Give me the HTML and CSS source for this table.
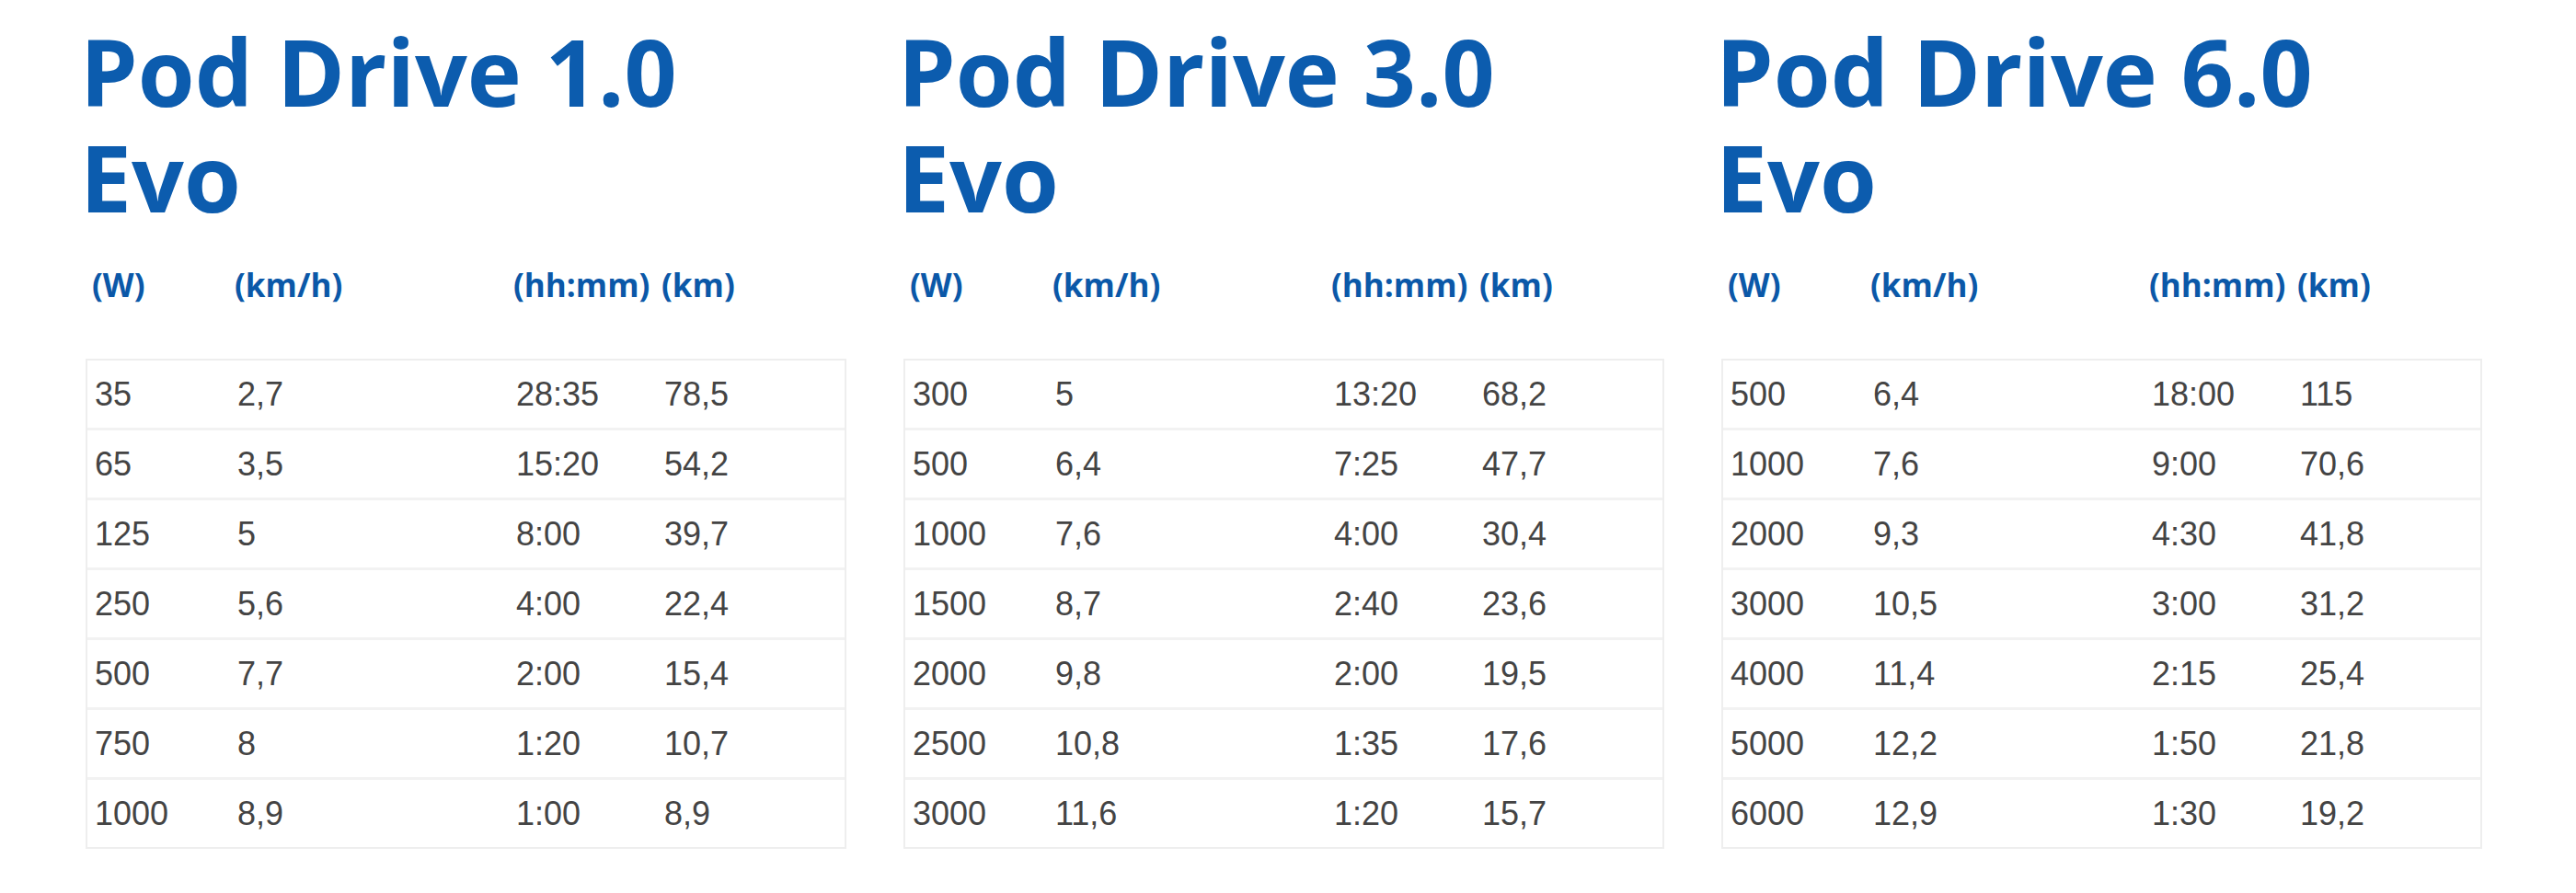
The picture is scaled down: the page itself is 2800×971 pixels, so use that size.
FILE: index.html
```html
<!DOCTYPE html>
<html lang="de">
<head>
<meta charset="utf-8">
<title>Pod Drive Evo</title>
<link rel="stylesheet" href="styles.css">
</head>
<body>
<main class="page">
  <section class="panel">
    <h2 class="title">Pod Drive 1.0<br>Evo</h2>
    <div class="head"><span>(W)</span><span>(km/h)</span><span>(hh:mm)</span><span>(km)</span></div>
    <div class="data">
      <div class="row"><span>35</span><span>2,7</span><span>28:35</span><span>78,5</span></div>
      <div class="row"><span>65</span><span>3,5</span><span>15:20</span><span>54,2</span></div>
      <div class="row"><span>125</span><span>5</span><span>8:00</span><span>39,7</span></div>
      <div class="row"><span>250</span><span>5,6</span><span>4:00</span><span>22,4</span></div>
      <div class="row"><span>500</span><span>7,7</span><span>2:00</span><span>15,4</span></div>
      <div class="row"><span>750</span><span>8</span><span>1:20</span><span>10,7</span></div>
      <div class="row"><span>1000</span><span>8,9</span><span>1:00</span><span>8,9</span></div>
    </div>
  </section>
  <section class="panel">
    <h2 class="title">Pod Drive 3.0<br>Evo</h2>
    <div class="head"><span>(W)</span><span>(km/h)</span><span>(hh:mm)</span><span>(km)</span></div>
    <div class="data">
      <div class="row"><span>300</span><span>5</span><span>13:20</span><span>68,2</span></div>
      <div class="row"><span>500</span><span>6,4</span><span>7:25</span><span>47,7</span></div>
      <div class="row"><span>1000</span><span>7,6</span><span>4:00</span><span>30,4</span></div>
      <div class="row"><span>1500</span><span>8,7</span><span>2:40</span><span>23,6</span></div>
      <div class="row"><span>2000</span><span>9,8</span><span>2:00</span><span>19,5</span></div>
      <div class="row"><span>2500</span><span>10,8</span><span>1:35</span><span>17,6</span></div>
      <div class="row"><span>3000</span><span>11,6</span><span>1:20</span><span>15,7</span></div>
    </div>
  </section>
  <section class="panel">
    <h2 class="title">Pod Drive 6.0<br>Evo</h2>
    <div class="head"><span>(W)</span><span>(km/h)</span><span>(hh:mm)</span><span>(km)</span></div>
    <div class="data">
      <div class="row"><span>500</span><span>6,4</span><span>18:00</span><span>115</span></div>
      <div class="row"><span>1000</span><span>7,6</span><span>9:00</span><span>70,6</span></div>
      <div class="row"><span>2000</span><span>9,3</span><span>4:30</span><span>41,8</span></div>
      <div class="row"><span>3000</span><span>10,5</span><span>3:00</span><span>31,2</span></div>
      <div class="row"><span>4000</span><span>11,4</span><span>2:15</span><span>25,4</span></div>
      <div class="row"><span>5000</span><span>12,2</span><span>1:50</span><span>21,8</span></div>
      <div class="row"><span>6000</span><span>12,9</span><span>1:30</span><span>19,2</span></div>
    </div>
  </section>
</main>
</body>
</html>
```
FILE: styles.css
```css
html, body {
  margin: 0;
  padding: 0;
  background: #ffffff;
}

.page {
  display: grid;
  grid-template-columns: repeat(3, 827px);
  column-gap: 62px;
  padding: 20px 0 0 93px;
}

.panel {
  display: flex;
  flex-direction: column;
}

.title {
  margin: 0 0 0 -6px;
  font-family: "Open Sans", "Liberation Sans", sans-serif;
  font-weight: 700;
  font-size: 100px;
  line-height: 115px;
  color: #0c5cae;
  letter-spacing: 0;
}

.head {
  display: grid;
  grid-template-columns: 155px 303px 161px 1fr;
  padding: 0 2px;
  margin-top: 40px;
  height: 40px;
  font-family: "Open Sans", "Liberation Sans", sans-serif;
  font-weight: 700;
  font-size: 35px;
  line-height: 40px;
  color: #0b58a8;
  white-space: nowrap;
}

.head span {
  padding-left: 5px;
}

.data {
  margin-top: 60px;
  border: 2px solid #eeeeee;
}

.row {
  display: grid;
  grid-template-columns: 155px 303px 161px 1fr;
  height: 73px;
  align-items: center;
  font-family: "Liberation Sans", Arial, sans-serif;
  font-size: 36px;
  line-height: 73px;
  color: #444444;
}

.row + .row {
  border-top: 3px solid #f2f2f2;
}

.row span {
  padding-left: 8px;
}
```
